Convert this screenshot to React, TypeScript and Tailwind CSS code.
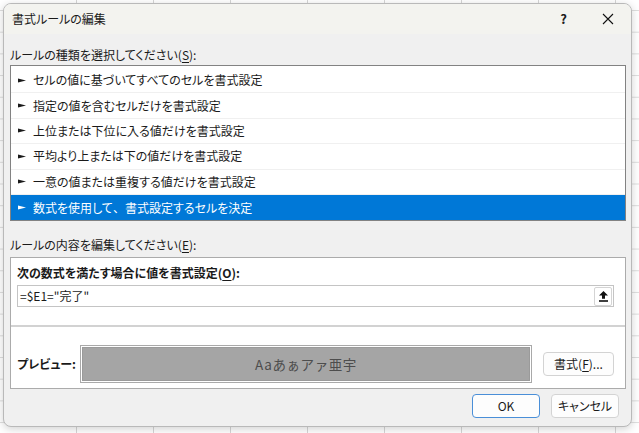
import type { ReactNode } from 'react';

const RULES: ReactNode[] = [
  'セルの値に基づいてすべてのセルを書式設定',
  '指定の値を含むセルだけを書式設定',
  '上位または下位に入る値だけを書式設定',
  '平均より上または下の値だけを書式設定',
  '一意の値または重複する値だけを書式設定',
  <>
    数式を使用して<span className="[font-feature-settings:normal]">、</span>書式設定するセルを決定
  </>,
];

const SELECTED = 5;

const font = "font-['Noto_Sans_CJK_JP','Noto_Sans',sans-serif] [font-feature-settings:'palt']";

function Key({ children }: { children: ReactNode }) {
  return <span className="underline underline-offset-2">{children}</span>;
}

function Pointer({ light }: { light: boolean }) {
  return (
    <svg width="8" height="5" viewBox="0 0 8 5" className="shrink-0">
      <polygon points="0,0.6 8,2.5 0,4.4" fill={light ? '#ffffff' : '#1a1a1a'} />
    </svg>
  );
}

function UploadIcon() {
  return (
    <svg width="9" height="11" viewBox="0 0 9 11">
      <polygon points="4.5,0 9,4.5 6,4.5 6,7.8 3,7.8 3,4.5 0,4.5" fill="#111" />
      <rect x="0" y="9.2" width="9" height="1.6" fill="#111" />
    </svg>
  );
}

export default function App() {
  return (
    <div
      className={`h-[433px] w-[639px] overflow-hidden bg-white bg-[linear-gradient(to_right,#d6d6d6_1px,transparent_1px),linear-gradient(to_bottom,#dedede_1px,transparent_1px)] bg-[size:77px_21.7px] bg-[position:76px_10px] pl-[3px] pt-[3px] ${font}`}
    >
      <div className="flex h-[424px] w-[629px] flex-col overflow-hidden rounded-[8px] border border-[#b9b9b9] bg-[#f0f0f0] text-[#1a1a1a] shadow-[0_2px_8px_rgba(0,0,0,0.18)]">
        {/* title bar */}
        <div className="flex h-[30px] shrink-0 items-center justify-between bg-[#f3f3ef] pl-[8px] pr-[17px]">
          <span className="text-[12px]">書式ルールの編集</span>
          <div className="flex items-center gap-[35px]">
            <span className="text-[13px] font-semibold">?</span>
            <svg width="12" height="12" viewBox="0 0 12 12">
              <path d="M1 1 L11 11 M11 1 L1 11" stroke="#111" strokeWidth="1.1" />
            </svg>
          </div>
        </div>

        <div className="flex flex-1 flex-col pl-[6px] pr-[5px]">
          <div className="mt-[13px] h-[16px] text-[12px] leading-[16px]">
            ルールの種類を選択してください(<Key>S</Key>):
          </div>

          <div className="mt-[2px] border border-[#828282] bg-white pt-[2px]">
            {RULES.map((r, i) => (
              <div
                key={i}
                className={`flex h-[25.4px] items-center gap-[7px] pl-[7px] text-[12px] ${
                  i === SELECTED ? 'bg-[#0078d7] text-white' : 'border-b border-[#f0f0f0]'
                }`}
              >
                <Pointer light={i === SELECTED} />
                <span>{r}</span>
              </div>
            ))}
          </div>

          <div className="mt-[16px] h-[16px] text-[12px] leading-[16px]">
            ルールの内容を編集してください(<Key>E</Key>):
          </div>

          <div className="mt-[4px] border border-[#ababab] bg-white">
            <div className="pb-[18px] pl-[6px] pr-[11px] pt-[7px]">
              <div className="h-[16px] text-[12px] font-bold leading-[16px]">
                次の数式を満たす場合に値を書式設定(<Key>O</Key>):
              </div>
              <div className="mt-[4px] flex h-[22px] items-center justify-between border border-[#c4c4c4] pl-[2px] pr-[1px]">
                <span className="text-[12px] [font-feature-settings:normal]">=$E1="完了"</span>
                <div className="flex h-[19px] w-[18px] items-center justify-center rounded-[2px] border border-[#d4d4d4] bg-white">
                  <UploadIcon />
                </div>
              </div>
            </div>
            <div className="h-[2px] bg-[#d2d2d2]" />
            <div className="flex items-center pb-[5px] pl-[6px] pr-[11px] pt-[18px]">
              <span className="w-[63px] text-[12px] font-bold">プレビュー:</span>
              <div className="h-[38px] w-[452px] border border-[#a9a9a9] bg-white p-px">
                <div className="flex h-full items-center justify-center bg-[#a5a5a5] text-[13.5px] tracking-[0.6px] text-[#4d4d4d] [font-feature-settings:normal] shadow-[inset_0_0_0_1px_#9a9a9a]">
                  Aaあぁアァ亜宇
                </div>
              </div>
              <button className="ml-auto flex h-[24px] w-[71px] items-center justify-center rounded-[4px] border border-[#d3d3d3] bg-[#fdfdfd] text-[12px]">
                書式(<Key>F</Key>)...
              </button>
            </div>
          </div>

          <div className="mt-[5px] flex justify-end gap-[11px] pr-[7px]">
            <button className="flex h-[24px] w-[68px] items-center justify-center rounded-[4px] border border-[#4a8fd8] bg-[#fdfdfd] text-[12px]">
              OK
            </button>
            <button className="flex h-[24px] w-[68px] items-center justify-center rounded-[4px] border border-[#d3d3d3] bg-[#fdfdfd] text-[12px]">
              キャンセル
            </button>
          </div>
        </div>
      </div>
    </div>
  );
}
